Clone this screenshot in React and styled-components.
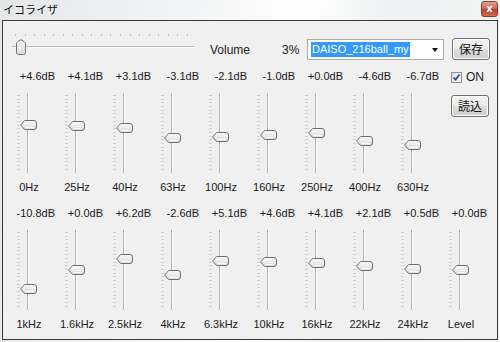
import React from "react";
import styled, { createGlobalStyle } from "styled-components";

const GlobalStyle = createGlobalStyle`
  html, body {
    margin: 0;
    padding: 0;
    background: #f2f2f2;
  }
  body {
    width: 500px;
    height: 342px;
    overflow: hidden;
    font-family: "Liberation Sans", "Noto Sans CJK JP", sans-serif;
    color: #1a1a1a;
  }
`;

const row1 = [
  { db: "+4.6dB", value: 4.6, hz: "0Hz" },
  { db: "+4.1dB", value: 4.1, hz: "25Hz" },
  { db: "+3.1dB", value: 3.1, hz: "40Hz" },
  { db: "-3.1dB", value: -3.1, hz: "63Hz" },
  { db: "-2.1dB", value: -2.1, hz: "100Hz" },
  { db: "-1.0dB", value: -1.0, hz: "160Hz" },
  { db: "+0.0dB", value: 0, hz: "250Hz" },
  { db: "-4.6dB", value: -4.6, hz: "400Hz" },
  { db: "-6.7dB", value: -6.7, hz: "630Hz" },
];

const row2 = [
  { db: "-10.8dB", value: -10.8, hz: "1kHz" },
  { db: "+0.0dB", value: 0, hz: "1.6kHz" },
  { db: "+6.2dB", value: 6.2, hz: "2.5kHz" },
  { db: "-2.6dB", value: -2.6, hz: "4kHz" },
  { db: "+5.1dB", value: 5.1, hz: "6.3kHz" },
  { db: "+4.6dB", value: 4.6, hz: "10kHz" },
  { db: "+4.1dB", value: 4.1, hz: "16kHz" },
  { db: "+2.1dB", value: 2.1, hz: "22kHz" },
  { db: "+0.5dB", value: 0.5, hz: "24kHz" },
  { db: "+0.0dB", value: 0, hz: "Level" },
];

const Window = styled.div`
  width: 500px;
  height: 342px;
  display: flex;
  flex-direction: column;
  background: linear-gradient(
    100deg,
    #e4e6e8 0%,
    #f4f5f6 35%,
    #ffffff 55%,
    #eef0f1 70%,
    #f6f6f6 100%
  );
`;

const TitleBar = styled.div`
  height: 20px;
  display: flex;
  justify-content: space-between;
  align-items: flex-start;
  padding: 0 2px 0 3px;
`;

const Title = styled.div`
  font-family: "Noto Sans CJK JP", sans-serif;
  font-size: 11px;
  line-height: 14px;
  margin-top: 2px;
  color: #111;
`;

const CloseButton = styled.div`
  width: 17px;
  height: 16px;
  margin-top: 1px;
  box-sizing: border-box;
  border: 1px solid #8a3b32;
  border-radius: 3px;
  background: linear-gradient(#e6a392, #cf6a55 45%, #b9422e 55%, #d06d55);
  color: #fff;
  font-family: "DejaVu Sans", sans-serif;
  font-size: 10px;
  font-weight: bold;
  line-height: 13px;
  text-align: center;
`;

const Client = styled.div`
  flex: 1;
  margin: 0 2px 2px 2px;
  border: 1px solid #3a3a3a;
  background: #f0f0f0;
  display: flex;
  flex-direction: column;
`;

const TopRow = styled.div`
  display: flex;
  align-items: center;
  height: 22px;
  margin-top: 17px;
`;

const HSlider = styled.div`
  position: relative;
  width: 184px;
  height: 22px;
  margin-left: 7px;
`;

const HTicks = styled.div`
  position: absolute;
  left: 5px;
  right: 6px;
  top: -4px;
  height: 2px;
  display: flex;
  justify-content: space-between;
`;

const HTick = styled.span`
  width: 1px;
  height: 2px;
  background: #bdbdbd;
`;

const HTrack = styled.div`
  position: absolute;
  left: 2px;
  right: 0;
  top: 8px;
  height: 1px;
  background: #b9b9b9;
  border-bottom: 1px solid #ffffff;
`;

const HThumb = styled.svg`
  position: absolute;
  top: 1px;
`;

const VolumeLabel = styled.div`
  width: 72px;
  margin-left: 16px;
  font-size: 12px;
  line-height: 14px;
  padding-top: 2px;
`;

const Percent = styled.div`
  width: 16px;
  font-size: 12px;
  line-height: 14px;
  padding-top: 2px;
`;

const Combo = styled.div`
  position: relative;
  width: 137px;
  height: 21px;
  margin-left: 9px;
  box-sizing: border-box;
  border: 1px solid #a9acb3;
  background: #fff;
  display: flex;
  align-items: center;
  padding-left: 3px;
`;

const Selected = styled.span`
  background: #3399ff;
  color: #fff;
  font-size: 11px;
  line-height: 15px;
  height: 15px;
  padding: 0 1px;
`;

const Arrow = styled.span`
  position: absolute;
  right: 5px;
  top: 8px;
  width: 0;
  height: 0;
  border-left: 3px solid transparent;
  border-right: 3px solid transparent;
  border-top: 4px solid #111;
`;

const Button = styled.div`
  width: 38px;
  height: 22px;
  box-sizing: border-box;
  margin-left: ${(p) => p.$ml || 0}px;
  margin-top: ${(p) => p.$mt || 0}px;
  border: 1px solid #707070;
  border-radius: 3px;
  background: linear-gradient(#f2f2f2, #ebebeb 48%, #dddddd 52%, #cfcfcf);
  box-shadow: inset 0 0 0 1px #fcfcfc;
  font-family: "Noto Sans CJK JP", sans-serif;
  font-size: 12px;
  line-height: 19px;
  text-align: center;
  color: #111;
`;

const Bands = styled.div`
  display: flex;
  flex-direction: column;
  gap: 13px;
  margin-top: 10px;
  padding-left: 1px;
`;

const BandRow = styled.div`
  display: flex;
`;

const Band = styled.div`
  width: 48px;
  display: flex;
  flex-direction: column;
  align-items: center;
`;

const DbLabel = styled.div`
  align-self: stretch;
  margin-right: -3px;
  text-align: right;
  font-size: 11px;
  line-height: 13px;
  height: 13px;
  white-space: nowrap;
`;

const VSlider = styled.div`
  position: relative;
  width: 48px;
  height: 80px;
  margin: 10px 0 8px;
`;

const VTicks = styled.div`
  position: absolute;
  left: 13px;
  width: 3px;
  top: 2px;
  bottom: 3px;
  display: flex;
  flex-direction: column;
  justify-content: space-between;
`;

const VTick = styled.span`
  height: 1px;
  background: #cfcfcf;
`;

const VTrack = styled.div`
  position: absolute;
  left: 23px;
  top: 0;
  bottom: 0;
  width: 1px;
  background: #b4b4b4;
  border-right: 1px solid #ffffff;
`;

const VThumb = styled.svg`
  position: absolute;
  left: 16px;
`;

const HzLabel = styled.div`
  font-size: 11px;
  line-height: 13px;
  height: 13px;
  white-space: nowrap;
  padding-left: 2px;
`;

const Side = styled.div`
  display: flex;
  flex-direction: column;
  margin-left: 15px;
`;

const CheckRow = styled.div`
  display: flex;
  align-items: center;
  margin-top: 1px;
  height: 13px;
`;

const CheckBox = styled.span`
  width: 11px;
  height: 11px;
  box-sizing: border-box;
  border: 1px solid #8f8f8f;
  background: linear-gradient(135deg, #dcdcdc, #ffffff);
  display: flex;
  align-items: center;
  justify-content: center;
`;

const CheckText = styled.span`
  margin-left: 4px;
  font-size: 12px;
  line-height: 13px;
`;

const thumbGrad = (
  <defs>
    <linearGradient id="tg" x1="0" y1="0" x2="0" y2="1">
      <stop offset="0" stopColor="#fbfbfb" />
      <stop offset="1" stopColor="#dadada" />
    </linearGradient>
  </defs>
);

const VerticalSlider = ({ value }) => {
  const center = 40 - value * 1.75;
  return (
    <VSlider>
      <VTicks>
        {Array.from({ length: 21 }, (_, i) => (
          <VTick key={i} />
        ))}
      </VTicks>
      <VTrack />
      <VThumb width="17" height="10" viewBox="0 0 17 10" style={{ top: center - 5 }}>
        {thumbGrad}
        <path
          d="M0.6 5 L4.6 0.5 H14 Q16.5 0.5 16.5 3 V7 Q16.5 9.5 14 9.5 H4.6 Z"
          fill="url(#tg)"
          stroke="#6f6f6f"
          strokeWidth="1"
        />
        <path d="M5 7.5 H14" stroke="#ffffff" strokeWidth="1" opacity="0.8" />
      </VThumb>
    </VSlider>
  );
};

const BandColumn = ({ band }) => (
  <Band>
    <DbLabel>{band.db}</DbLabel>
    <VerticalSlider value={band.value} />
    <HzLabel>{band.hz}</HzLabel>
  </Band>
);

const VolumeSlider = () => (
  <HSlider>
    <HTicks>
      {Array.from({ length: 19 }, (_, i) => (
        <HTick key={i} />
      ))}
    </HTicks>
    <HTrack />
    <HThumb width="10" height="16" viewBox="0 0 10 16" style={{ left: 6 }}>
      {thumbGrad}
      <path
        d="M0.5 5 Q0.5 3.5 2 2.5 L5 0.6 L8 2.5 Q9.5 3.5 9.5 5 V13.5 Q9.5 15.5 7.5 15.5 H2.5 Q0.5 15.5 0.5 13.5 Z"
        fill="url(#tg)"
        stroke="#6f6f6f"
        strokeWidth="1"
      />
    </HThumb>
  </HSlider>
);

const App = () => {
  return (
    <>
      <GlobalStyle />
      <Window>
        <TitleBar>
          <Title>イコライザ</Title>
          <CloseButton>x</CloseButton>
        </TitleBar>
        <Client>
          <TopRow>
            <VolumeSlider />
            <VolumeLabel>Volume</VolumeLabel>
            <Percent>3%</Percent>
            <Combo>
              <Selected>DAISO_216ball_my</Selected>
              <Arrow />
            </Combo>
            <Button $ml={8}>保存</Button>
          </TopRow>
          <Bands>
            <BandRow>
              {row1.map((b) => (
                <BandColumn key={b.hz} band={b} />
              ))}
              <Side>
                <CheckRow>
                  <CheckBox>
                    <svg width="9" height="9" viewBox="0 0 9 9">
                      <path d="M1.5 4.5 L3.6 6.8 L7.5 1.5" fill="none" stroke="#2a3f8f" strokeWidth="1.6" />
                    </svg>
                  </CheckBox>
                  <CheckText>ON</CheckText>
                </CheckRow>
                <Button $mt={11}>読込</Button>
              </Side>
            </BandRow>
            <BandRow>
              {row2.map((b) => (
                <BandColumn key={b.hz} band={b} />
              ))}
            </BandRow>
          </Bands>
        </Client>
      </Window>
    </>
  );
};

export default App;
